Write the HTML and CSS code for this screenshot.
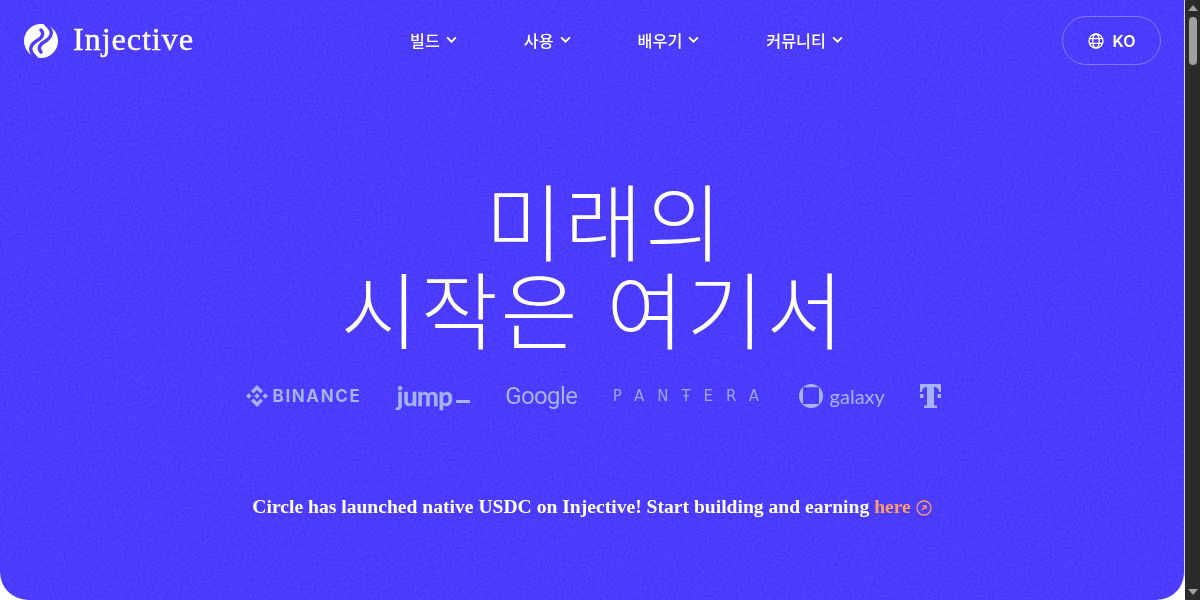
FILE: index.html
```html
<!DOCTYPE html>
<html lang="ko">

<head>
  <meta charset="UTF-8">
  <title>Injective</title>
  <link rel="stylesheet" href="styles.css">
</head>

<body>
  <main class="hero">
    <svg class="grain" width="100%" height="100%" aria-hidden="true">
      <filter id="noise" x="0" y="0" width="100%" height="100%" color-interpolation-filters="sRGB">
        <feTurbulence type="fractalNoise" baseFrequency="0.42" numOctaves="3" seed="4" />
        <feColorMatrix type="matrix" values="0.9 0.9 0 0 -0.4  0.9 0.9 0 0 -0.4  0.9 0.9 0 0 -0.4  0 0 0 0 1" />
      </filter>
      <rect width="100%" height="100%" filter="url(#noise)" />
    </svg>

    <header class="topbar">
      <a class="brand" href="#">
        <svg class="brand-mark" viewBox="0 0 34 34" width="34" height="34">
          <circle cx="17" cy="17" r="17" fill="#fff" />
          <path d="M22 0.500C31 8 27 14 20 18C15 21 14 25 17 28M12 33.500C3 26 7 20 14 16C19 13 20 9 17 6" />
        </svg>
        <span class="brand-name">Injective</span>
      </a>

      <nav class="nav">
        <a class="nav-item" href="#">빌드 <svg class="chev" viewBox="0 0 10 6"><path d="M1 1l4 4 4-4" /></svg></a>
        <a class="nav-item" href="#">사용 <svg class="chev" viewBox="0 0 10 6"><path d="M1 1l4 4 4-4" /></svg></a>
        <a class="nav-item" href="#">배우기 <svg class="chev" viewBox="0 0 10 6"><path d="M1 1l4 4 4-4" /></svg></a>
        <a class="nav-item" href="#">커뮤니티 <svg class="chev" viewBox="0 0 10 6"><path d="M1 1l4 4 4-4" /></svg></a>
      </nav>

      <button class="lang">
        <svg class="globe" viewBox="0 0 16 16" width="16" height="16">
          <circle cx="8" cy="8" r="7" />
          <ellipse cx="8" cy="8" rx="3.200" ry="7" />
          <path d="M1.400 5.600h13.200M1.400 10.400h13.200" />
        </svg>
        KO
      </button>
    </header>

    <section class="intro">
      <h1 class="title"><span class="title-first">미래의</span><br>시작은 여기서</h1>

      <div class="partners">
        <div class="partner binance">
          <svg viewBox="0 0 22 22" width="22" height="22">
            <path d="M11 0l6 6-2.500 2.500L11 5 7.500 8.500 5 6zM11 22l-6-6 2.500-2.500L11 17l3.500-3.500L17 16zM0 11l2.800-2.800L5.600 11l-2.800 2.800zM16.400 11l2.800-2.800L22 11l-2.800 2.800zM11 8.200l2.800 2.800-2.800 2.800L8.200 11z" />
          </svg>
          <span>BINANCE</span>
        </div>
        <div class="partner jump">jump<i></i></div>
        <div class="partner google">Google</div>
        <div class="partner pantera">PANŦERA</div>
        <div class="partner galaxy">
          <svg viewBox="0 0 24 24" width="24" height="24">
            <path fill-rule="evenodd" d="M12 0a12 12 0 1 1 0 24a12 12 0 1 1 0-24zM4 3.300v16.700h16V3.300z" />
          </svg>
          <span>galaxy</span>
        </div>
        <svg class="partner tmobile" viewBox="0 0 21 24" width="21" height="24">
          <path d="M0 0h21v8h-2c0-2.500-1.500-5-5-5V21c0 .5 1 .5 3 .5V24H4v-2.500c2 0 3 0 3-.5V3C3.500 3 2 5.500 2 8H0zM0 10h3.500v4H0zM17.500 10H21v4h-3.500z" />
        </svg>
      </div>

      <p class="notice">Circle has launched native USDC on Injective! Start building and earning <a href="#">here
          <svg viewBox="0 0 16 16" width="16" height="16">
            <circle cx="8" cy="8" r="7" />
            <path d="M5.800 10.200l4-4M6.500 5.800h3.500v3.500" />
          </svg></a></p>
    </section>
  </main>

  <div class="scrollbar">
    <span class="arrow up"></span>
    <span class="thumb"></span>
    <span class="arrow down"></span>
  </div>
</body>

</html>
```

FILE: styles.css
```css
* {
  box-sizing: border-box;
}

html,
body {
  height: 100%;
}

body {
  margin: 0;
  display: flex;
  overflow: hidden;
  background: #fff;
  font-family: 'Noto Sans CJK KR', 'Noto Sans', sans-serif;
  color: #fff;
}

a {
  color: inherit;
  text-decoration: none;
}

.hero {
  position: relative;
  flex: 1;
  display: flex;
  flex-direction: column;
  overflow: hidden;
  border-right: 1px solid #d5d1ff;
  background: #4b3bfd;
  border-radius: 0 0 28px 28px;
}

.grain {
  position: absolute;
  top: 0;
  left: 0;
  opacity: 0.17;
  mix-blend-mode: overlay;
  pointer-events: none;
}

.topbar {
  position: relative;
  display: flex;
  justify-content: space-between;
  align-items: center;
  padding: 16px 23px 0 24px;
}

.brand {
  display: flex;
  align-items: center;
  gap: 15px;
}

.brand-mark path {
  fill: none;
  stroke: #4b3bfd;
  stroke-width: 3.400;
  stroke-linecap: round;
}

.brand-name {
  padding-bottom: 4px;
  font-family: 'Liberation Serif', serif;
  font-size: 32.500px;
  letter-spacing: 0.8px;
  line-height: 40px;
  -webkit-text-stroke: 0.4px #fff;
}

.nav {
  display: flex;
  gap: 67px;
  margin-right: 3px;
}

.nav-item {
  display: flex;
  align-items: center;
  gap: 6px;
  font-size: 16.200px;
  font-weight: 500;
  line-height: 22px;
  margin-top: -2px;
}

.chev {
  width: 11px;
  height: 7px;
  fill: none;
  stroke: #fff;
  stroke-width: 1.700;
}

.lang {
  display: flex;
  align-items: center;
  justify-content: center;
  gap: 9px;
  width: 99px;
  height: 49px;
  border: 1px solid rgba(255, 255, 255, 0.3);
  border-radius: 25px;
  background: transparent;
  color: #fff;
  font-family: Inter, sans-serif;
  font-size: 16px;
  font-weight: 600;
}

.globe {
  fill: none;
  stroke: #fff;
  stroke-width: 1.300;
}

.intro {
  position: relative;
  display: flex;
  flex-direction: column;
  align-items: center;
}

.title {
  margin: 110px 0 0 3px;
  font-size: 84px;
  font-weight: 300;
  letter-spacing: 2.600px;
  line-height: 88px;
  text-align: center;
}

.title-first {
  padding-left: 23px;
}

.partners {
  display: flex;
  align-items: center;
  gap: 35.500px;
  margin: 28px 0 0 3px;
  height: 34px;
  color: #a5b2ff;
}

.partner {
  display: flex;
  align-items: center;
  fill: currentColor;
}

.binance {
  gap: 5px;
  font-family: Inter, sans-serif;
  font-size: 17px;
  font-weight: 700;
  letter-spacing: 1.600px;
}

.jump {
  font-family: Lato, sans-serif;
  font-size: 26px;
  font-weight: 700;
  letter-spacing: -0.5px;
  -webkit-text-stroke: 0.3px #a5b2ff;
}

.jump i {
  display: block;
  width: 14px;
  height: 3px;
  margin: 11px 0 0 3px;
  background: currentColor;
}

.google {
  font-family: Roboto, sans-serif;
  font-size: 24px;
  letter-spacing: -0.6px;
}

.pantera {
  font-family: 'DejaVu Sans', sans-serif;
  font-size: 15px;
  letter-spacing: 13px;
  margin-right: -9px;
  color: #98a5fb;
}

.galaxy {
  gap: 7px;
  font-family: Lato, sans-serif;
  font-size: 20px;
  font-weight: 400;
}

.notice {
  margin: 80px 0 0;
  font-family: 'Liberation Serif', serif;
  font-size: 19.600px;
  font-weight: 700;
  line-height: 28px;
}

.notice a {
  color: #ff9d66;
}

.notice svg {
  vertical-align: -3px;
  fill: none;
  stroke: currentColor;
  stroke-width: 1.300;
}

.scrollbar {
  display: flex;
  flex-direction: column;
  align-items: center;
  width: 15px;
  background: #2b2b2b;
}

.arrow {
  width: 0;
  height: 0;
  margin: 5px 0;
  border-style: solid;
  border-color: transparent;
}

.arrow.up {
  border-width: 0 5px 6px;
  border-bottom-color: #a0a0a0;
}

.arrow.down {
  border-width: 6px 5px 0;
  border-top-color: #a0a0a0;
  margin-top: auto;
}

.thumb {
  width: 8px;
  height: 48px;
  margin-top: 1px;
  border-radius: 4px;
  background: #9f9f9f;
}
```
